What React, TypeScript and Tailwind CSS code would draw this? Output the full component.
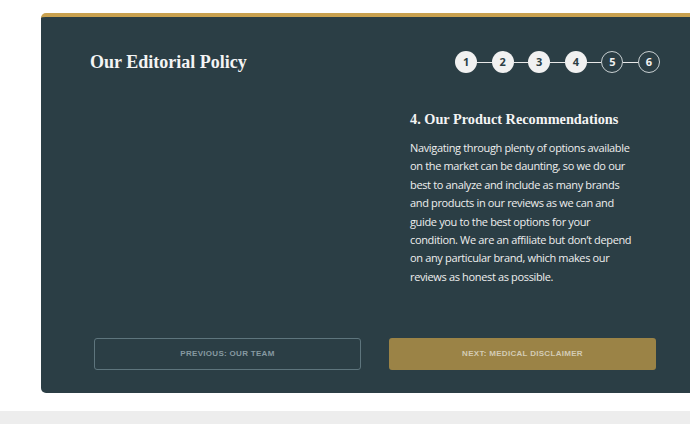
import React from "react";

const steps = [1, 2, 3, 4, 5, 6];
const current = 4;

const lines = [
  "Navigating through plenty of options available",
  "on the market can be daunting, so we do our",
  "best to analyze and include as many brands",
  "and products in our reviews as we can and",
  "guide you to the best options for your",
  "condition. We are an affiliate but don’t depend",
  "on any particular brand, which makes our",
  "reviews as honest as possible.",
];

function StepDots() {
  return (
    <div className="flex items-center">
      {steps.map((n, i) => (
        <div key={n} className="flex items-center">
          {i > 0 && <div className="h-px w-[14.6px] bg-[#e8e8e8]" />}
          <div
            className={
              n <= current
                ? "flex h-[22px] w-[22px] items-center justify-center rounded-full bg-[#f1f1f1] text-[11px] font-bold text-[#2b3e45]"
                : "flex h-[22px] w-[22px] items-center justify-center rounded-full border border-[#c9d0d2] text-[11px] font-bold text-[#f1f1f1]"
            }
          >
            {n}
          </div>
        </div>
      ))}
    </div>
  );
}

export default function App() {
  return (
    <div className="h-[424px] w-[690px] overflow-hidden bg-white font-['Open_Sans',sans-serif]">
      <div className="h-[411px] pt-[13px]">
        <div className="ml-[41px] w-[670px] rounded-[5px] border-t-4 border-[#c9a14f] bg-[#2b3e45] pb-[23px]">
          <div className="flex items-center justify-between pl-[49px] pr-[51px] pt-[33px]">
            <h1 className="font-['Liberation_Serif',serif] text-[18px] font-bold leading-[24px] text-[#f4f4f4]">
              Our Editorial Policy
            </h1>
            <StepDots />
          </div>

          <div className="ml-[369px] mt-[35px] w-[240px]">
            <h2 className="font-['Liberation_Serif',serif] text-[14.3px] font-bold leading-[20px] text-[#f4f4f4]">
              4. Our Product Recommendations
            </h2>
            <p className="mt-[10px] text-[11px] leading-[18.4px] tracking-[-0.35px] text-[#eeeeee]">
              {lines.map((l) => (
                <span key={l} className="block whitespace-nowrap">
                  {l}
                </span>
              ))}
            </p>
          </div>

          <div className="mt-[52px] flex gap-[28px] pl-[53px]">
            <button className="h-[32px] w-[267px] rounded-[3px] border border-[#5e757d] font-['Liberation_Sans',sans-serif] text-[8px] font-bold uppercase tracking-[0.3px] text-[#8699a1]">
              Previous: Our Team
            </button>
            <button className="h-[32px] w-[267px] rounded-[3px] bg-[#9b8346] font-['Liberation_Sans',sans-serif] text-[8px] font-bold uppercase tracking-[0.3px] text-[#d3cbb4]">
              Next: Medical Disclaimer
            </button>
          </div>
        </div>
      </div>
      <div className="h-[13px] bg-[#ededed]" />
    </div>
  );
}
